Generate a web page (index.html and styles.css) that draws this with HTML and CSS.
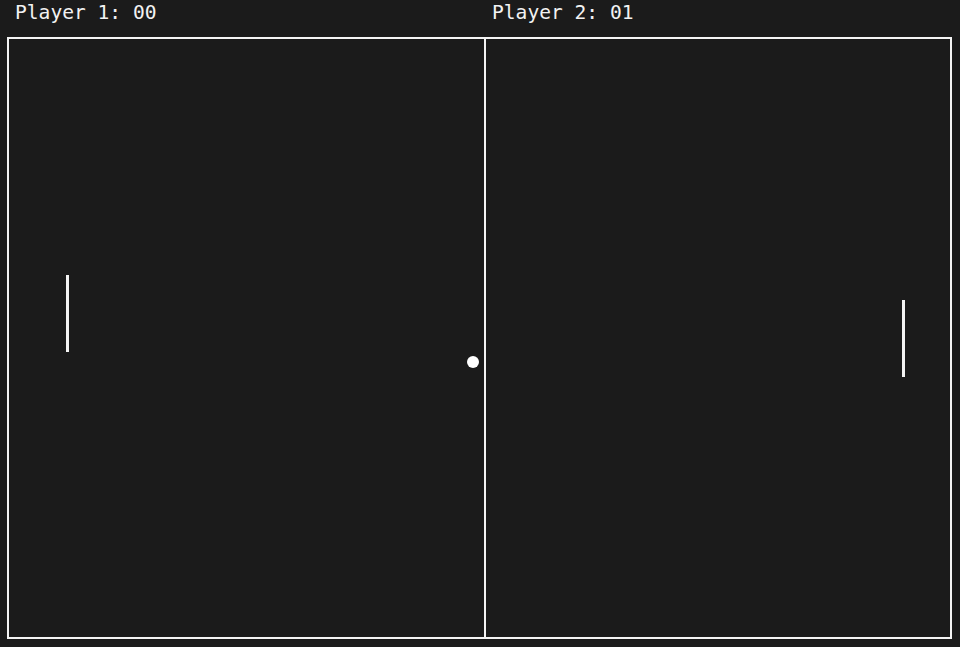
FILE: index.html
```html
<!DOCTYPE html>
<html lang="en">
<head>
<meta charset="utf-8">
<title>Pong</title>
<link rel="stylesheet" href="styles.css">
</head>
<body>
<div class="game">
  <div class="scores">
    <div class="score">Player 1: 00</div>
    <div class="score">Player 2: 01</div>
  </div>
  <div class="court">
    <div class="half half-left"></div>
    <div class="half"></div>
    <div class="paddle paddle-left"></div>
    <div class="paddle paddle-right"></div>
    <div class="ball"></div>
  </div>
</div>
</body>
</html>
```
FILE: styles.css
```css
html, body {
  margin: 0;
  padding: 0;
  background: #1b1b1b;
}
body {
  width: 960px;
  height: 647px;
  overflow: hidden;
}
.game {
  width: 945px;
  margin-left: 7px;
}
.scores {
  display: grid;
  grid-template-columns: 477px 1fr;
  height: 37px;
}
.score {
  padding-left: 8px;
  padding-top: 1px;
  font-family: "DejaVu Sans Mono", "Liberation Mono", monospace;
  font-size: 19.6px;
  line-height: 24px;
  color: #f2f2f2;
}
.court {
  position: relative;
  box-sizing: border-box;
  height: 602px;
  border: 2px solid #f4f4f4;
  display: grid;
  grid-template-columns: 477px 1fr;
}
.half-left {
  border-right: 2px solid #f4f4f4;
  width: 475px;
}
.paddle {
  position: absolute;
  width: 3px;
  height: 77px;
  background: #f4f4f4;
}
.paddle-left {
  left: 57px;
  top: 236px;
}
.paddle-right {
  left: 893px;
  top: 261px;
}
.ball {
  position: absolute;
  left: 458px;
  top: 317px;
  width: 12px;
  height: 12px;
  border-radius: 50%;
  background: #ffffff;
}
```
